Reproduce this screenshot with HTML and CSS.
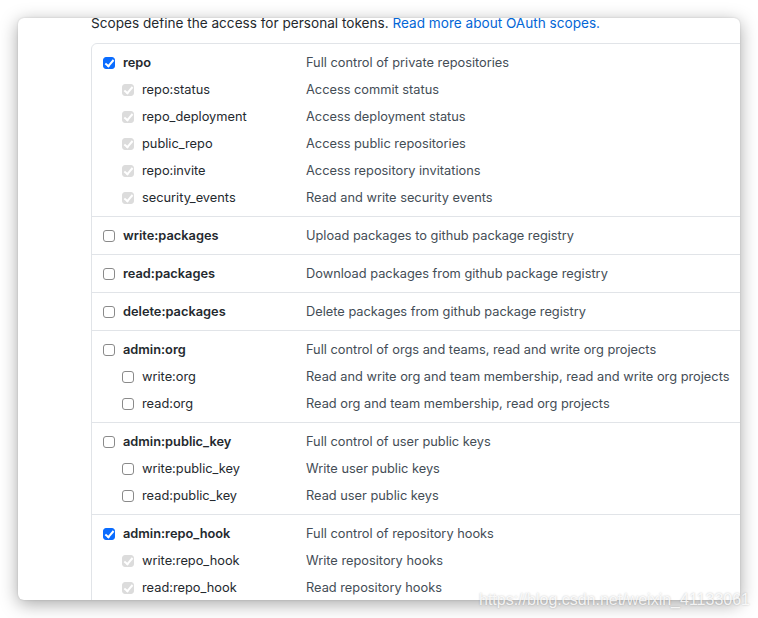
FILE: index.html
```html
<!DOCTYPE html>
<html>
<head>
<meta charset="utf-8">
<link rel="stylesheet" href="styles.css">
</head>
<body>
<div class="window">
  <p class="intro">Scopes define the access for personal tokens. <a href="#">Read more about OAuth scopes.</a></p>
  <div class="scopes">
    <div class="group">
      <div class="row parent"><span class="cb checked"></span><span class="name">repo</span><span class="desc">Full control of private repositories</span></div>
      <div class="row child"><span class="cb disabled"></span><span class="name">repo:status</span><span class="desc">Access commit status</span></div>
      <div class="row child"><span class="cb disabled"></span><span class="name">repo_deployment</span><span class="desc">Access deployment status</span></div>
      <div class="row child"><span class="cb disabled"></span><span class="name">public_repo</span><span class="desc">Access public repositories</span></div>
      <div class="row child"><span class="cb disabled"></span><span class="name">repo:invite</span><span class="desc">Access repository invitations</span></div>
      <div class="row child"><span class="cb disabled"></span><span class="name">security_events</span><span class="desc">Read and write security events</span></div>
    </div>
    <div class="group">
      <div class="row parent"><span class="cb"></span><span class="name">write:packages</span><span class="desc">Upload packages to github package registry</span></div>
    </div>
    <div class="group">
      <div class="row parent"><span class="cb"></span><span class="name">read:packages</span><span class="desc">Download packages from github package registry</span></div>
    </div>
    <div class="group">
      <div class="row parent"><span class="cb"></span><span class="name">delete:packages</span><span class="desc">Delete packages from github package registry</span></div>
    </div>
    <div class="group">
      <div class="row parent"><span class="cb"></span><span class="name">admin:org</span><span class="desc">Full control of orgs and teams, read and write org projects</span></div>
      <div class="row child"><span class="cb"></span><span class="name">write:org</span><span class="desc">Read and write org and team membership, read and write org projects</span></div>
      <div class="row child"><span class="cb"></span><span class="name">read:org</span><span class="desc">Read org and team membership, read org projects</span></div>
    </div>
    <div class="group">
      <div class="row parent"><span class="cb"></span><span class="name">admin:public_key</span><span class="desc">Full control of user public keys</span></div>
      <div class="row child"><span class="cb"></span><span class="name">write:public_key</span><span class="desc">Write user public keys</span></div>
      <div class="row child"><span class="cb"></span><span class="name">read:public_key</span><span class="desc">Read user public keys</span></div>
    </div>
    <div class="group">
      <div class="row parent"><span class="cb checked"></span><span class="name">admin:repo_hook</span><span class="desc">Full control of repository hooks</span></div>
      <div class="row child"><span class="cb disabled"></span><span class="name">write:repo_hook</span><span class="desc">Write repository hooks</span></div>
      <div class="row child"><span class="cb disabled"></span><span class="name">read:repo_hook</span><span class="desc">Read repository hooks</span></div>
    </div>
  </div>
</div>
<div class="watermark">https://blog.csdn.net/weixin_41133061</div>
</body>
</html>
```
FILE: styles.css
```css
html, body {
  margin: 0;
  padding: 0;
  background: #ffffff;
  width: 758px;
  height: 618px;
  overflow: hidden;
  position: relative;
  font-family: Inter, "Liberation Sans", Arial, sans-serif;
}

.window {
  margin: 18px 0 0 18px;
  width: 722px;
  height: 582px;
  border-radius: 6px;
  background: #ffffff;
  box-shadow: 0 4px 18px rgba(0, 0, 0, 0.35), 0 0 2px rgba(0, 0, 0, 0.15);
  overflow: hidden;
  padding-left: 73px;
  box-sizing: border-box;
}

.intro {
  margin: 0;
  height: 25px;
  line-height: 10px;
  font-size: 13.6px;
  color: #24292e;
  white-space: nowrap;
}

.intro a {
  color: #0366d6;
  text-decoration: none;
}

.scopes {
  width: 720px;
  border: 1px solid #e1e4e8;
  border-radius: 6px;
  font-size: 12.8px;
  color: #24292e;
}

.group {
  padding: 5px 0 5px 0;
  border-top: 1px solid #e1e4e8;
}

.group:first-child {
  border-top: none;
}

.row {
  display: flex;
  align-items: center;
  height: 27px;
  white-space: nowrap;
}

.row.parent {
  padding-left: 11px;
}

.row.child {
  padding-left: 30px;
}

.row.parent .name {
  font-weight: 600;
  width: 183px;
}

.row.child .name {
  width: 164px;
}

.cb {
  width: 12px;
  height: 12px;
  box-sizing: border-box;
  border: 1px solid #8a8a8a;
  border-radius: 3px;
  background: #ffffff;
  margin-right: 8px;
  position: relative;
  flex: none;
}

.cb.checked {
  background: #0a6cff;
  border-color: #0a6cff;
}

.cb.disabled {
  background: #dcdcdc;
  border-color: #dcdcdc;
}

.cb.checked::after,
.cb.disabled::after {
  content: "";
  position: absolute;
  left: 3px;
  top: 0px;
  width: 3px;
  height: 7px;
  border: solid #ffffff;
  border-width: 0 2px 2px 0;
  transform: rotate(40deg);
}

.desc {
  color: #444d56;
}

.watermark {
  position: absolute;
  left: 479px;
  top: 591px;
  font-size: 16px;
  line-height: 18px;
  color: rgba(255, 255, 255, 0.85);
  text-shadow: 0 0 2px rgba(0, 0, 0, 0.25);
  white-space: nowrap;
  font-family: "Liberation Sans", Arial, sans-serif;
}
```
